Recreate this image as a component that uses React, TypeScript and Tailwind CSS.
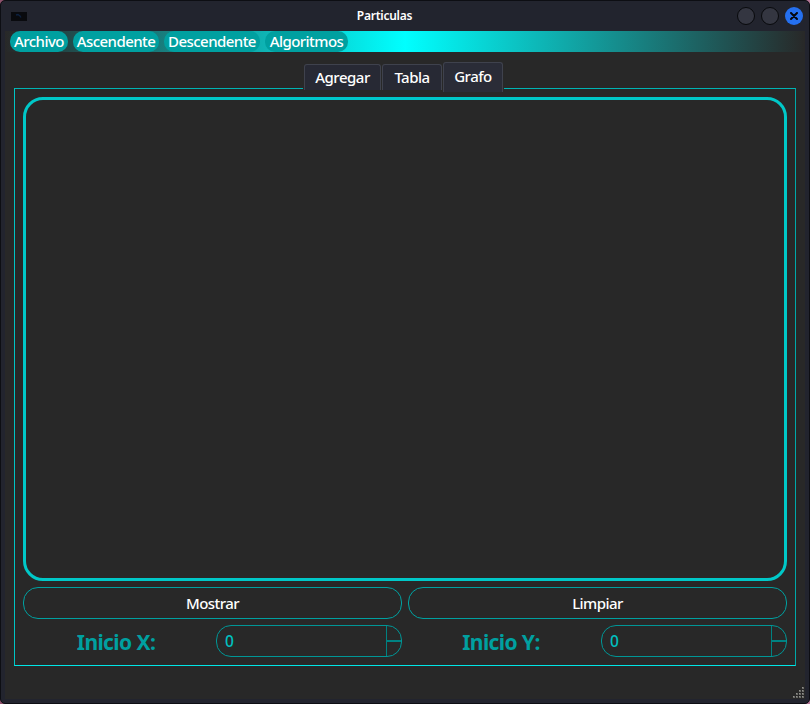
import React from "react";

function MenuItem({ label, className }: { label: string; className: string }) {
  return (
    <div className={`flex h-[21px] items-center justify-center rounded-[10px] bg-[#00a0a0] text-[15px] font-medium tracking-[-0.55px] whitespace-nowrap text-white ${className}`}>
      {label}
    </div>
  );
}

function TitleBar() {
  return (
    <header className="flex h-[30px] items-center justify-between pr-1.5 pl-2.5">
      <svg className="h-[9px] w-4" viewBox="0 0 16 9">
        <rect width="16" height="9" fill="#090a0e" />
        <path d="M5 3l2-.5 2 1.5 1 1.5" stroke="#0d2140" strokeWidth="1.3" fill="none" />
      </svg>
      <div className="flex flex-1 justify-center pl-[5px]">
        <h1 className="text-[12px] leading-none font-semibold tracking-[-0.25px] text-white">Particulas</h1>
      </div>
      <div className="flex gap-1.5">
        <span className="size-[18px] rounded-full border border-[#08090c] bg-[#343641]" />
        <span className="size-[18px] rounded-full border border-[#08090c] bg-[#343641]" />
        <span className="flex size-[18px] items-center justify-center rounded-full bg-[#2570f0]">
          <svg className="size-2" viewBox="0 0 8 8">
            <path d="M1 1l6 6M7 1L1 7" stroke="#05070d" strokeWidth="2" strokeLinecap="round" />
          </svg>
        </span>
      </div>
    </header>
  );
}

function Tab({ label, className }: { label: string; className: string }) {
  return (
    <button className={`flex items-center justify-center rounded-t-[3px] border border-b-0 border-[#3f424d] text-[15px] leading-none font-medium tracking-[-0.5px] text-white ${className}`}>
      {label}
    </button>
  );
}

function ActionButton({ label }: { label: string }) {
  return (
    <button className="h-8 flex-1 rounded-[15px] border border-[#00a0a0] text-[15px] leading-none font-medium tracking-[-0.55px] text-white">
      {label}
    </button>
  );
}

function SpinField({ label }: { label: string }) {
  return (
    <div className="flex h-8 flex-1 items-center">
      <label className="w-[193px] pt-0.5 pr-[7px] text-center text-[21px] leading-none font-bold tracking-[-0.6px] text-[#00a0a0]">
        {label}
      </label>
      <div className="flex h-8 flex-1 overflow-hidden rounded-[15px] border border-[#009696]">
        <span className="flex-1 self-center pt-0.5 pl-2 text-[15.5px] leading-none font-medium text-[#00c0c0]">0</span>
        <div className="flex w-[15px] flex-col border-l border-[#008282]">
          <span className="h-[15px] border-b border-[#008282]" />
          <span className="h-[15px] border-t border-[#008282]" />
        </div>
      </div>
    </div>
  );
}

function SizeGrip() {
  const dots = [[9, 0], [6, 3], [9, 3], [3, 6], [6, 6], [9, 6], [0, 9], [3, 9], [6, 9], [9, 9]];
  return (
    <svg className="size-[11px]" viewBox="0 0 11 11" shapeRendering="crispEdges">
      {dots.map(([x, y]) => (
        <g key={`${x}-${y}`}>
          <rect x={x} y={y} width="2" height="2" fill="#6b6b68" />
          <rect x={x} y={y} width="1" height="1" fill="#92928e" />
        </g>
      ))}
    </svg>
  );
}

export default function App() {
  return (
    <div className="h-[704px] w-[810px] bg-[linear-gradient(90deg,#8f526d,#b7799a)] font-['Noto_Sans',sans-serif]">
      <div className="flex h-full flex-col rounded-[5px] border border-[#0d0e13] bg-[#22242e]">
        <TitleBar />
        <main className="mx-1 flex h-[668px] flex-col bg-[#282828]">
          <nav className="flex h-[21px] gap-[5px] bg-[linear-gradient(90deg,#282828,#00ffff_50%,#282828)] pl-[5px]">
            <MenuItem label="Archivo" className="w-[58px]" />
            <MenuItem label="Ascendente" className="w-[86px]" />
            <MenuItem label="Descendente" className="w-24" />
            <MenuItem label="Algoritmos" className="w-[83px]" />
          </nav>
          <div className="z-10 mt-2.5 -mb-1 flex h-[30px] items-end justify-center pr-[3px]">
            <div className="flex h-[30px] items-start gap-px bg-[#282828] px-px">
              <Tab label="Agregar" className="mt-0.5 h-[26px] w-[77px] bg-[#272934]" />
              <Tab label="Tabla" className="mt-0.5 h-[26px] w-[60px] bg-[#272934]" />
              <Tab label="Grafo" className="h-[30px] w-[60px] bg-[#2a2c37] pb-0.5" />
            </div>
          </div>
          <section className="mr-[9px] ml-[9px] flex h-[578px] flex-col border border-t-[#00b4b4] border-r-[#00a8a8] border-b-[#00e6e6] border-l-[#00c4c4] px-2 pt-2">
            <div className="h-[484px] rounded-[20px] border-3 border-[#00c8c8]" />
            <div className="mt-1.5 flex gap-1.5">
              <ActionButton label="Mostrar" />
              <ActionButton label="Limpiar" />
            </div>
            <div className="mt-1.5 flex gap-1.5">
              <SpinField label="Inicio X:" />
              <SpinField label="Inicio Y:" />
            </div>
          </section>
          <footer className="mt-auto flex justify-end pr-px pb-px">
            <SizeGrip />
          </footer>
        </main>
      </div>
    </div>
  );
}
